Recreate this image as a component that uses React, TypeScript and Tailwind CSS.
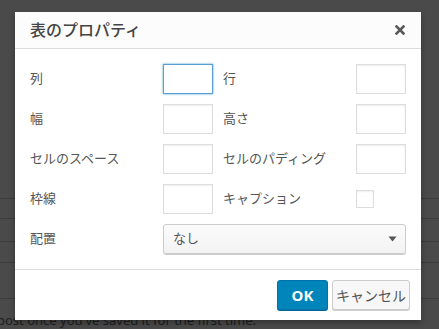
const font = { fontFamily: '"Noto Sans", "Noto Sans CJK JP", sans-serif' }

function Field({ focused }: { focused?: boolean }) {
    return (
        <div
            className={
                focused
                    ? 'h-[30px] w-[50px] border border-[#5b9dd9] bg-white shadow-[0_0_2px_rgba(30,140,190,0.8)]'
                    : 'h-[30px] w-[50px] border border-[#dddddd] bg-white shadow-[inset_0_1px_2px_rgba(0,0,0,0.07)]'
            }
        />
    )
}

function Label({ text }: { text: string }) {
    return <div className="flex h-[30px] items-center text-[13px] text-[#555555]">{text}</div>
}

export default function App() {
    return (
        <div className="relative h-[329px] w-[439px] overflow-hidden bg-[#4a4a4a]" style={font}>
            {/* dimmed page behind the modal */}
            <div className="flex flex-col">
                <div className="h-[198px]" />
                <div className="h-[20px] border-t border-[#3c3c3c]" />
                <div className="h-[23px] border-t border-[#3c3c3c]" />
                <div className="h-[21px] border-t border-[#3c3c3c]" />
                <div className="h-[36px] border-t border-[#3c3c3c]" />
                <div className="border-t border-[#3c3c3c] pt-[13px]">
                    <div className="-ml-[3px] whitespace-nowrap text-[13px] leading-[16px] text-[#1e1e1e]">
                        post once you've saved it for the first time.
                    </div>
                </div>
            </div>

            {/* modal */}
            <div className="absolute left-[15px] top-[12px] flex w-[406px] flex-col bg-white shadow-[0_3px_6px_rgba(0,0,0,0.3)]">
                <div className="flex h-[37px] items-center justify-between border-b border-[#dddddd] bg-[#fcfcfc] pl-[15px] pr-[16px]">
                    <span className="text-[16px] font-medium text-[#444444]">表のプロパティ</span>
                    <svg width="10" height="10" viewBox="0 0 10 10">
                        <path d="M1.5 1.5 L8.5 8.5 M8.5 1.5 L1.5 8.5" stroke="#595959" strokeWidth="2.6" strokeLinecap="square" />
                    </svg>
                </div>

                <div className="grid grid-cols-[133px_50px_10px_133px_50px] gap-y-[10px] px-[15px] py-[15px]">
                    <Label text="列" />
                    <Field focused />
                    <div />
                    <Label text="行" />
                    <Field />

                    <Label text="幅" />
                    <Field />
                    <div />
                    <Label text="高さ" />
                    <Field />

                    <Label text="セルのスペース" />
                    <Field />
                    <div />
                    <Label text="セルのパディング" />
                    <Field />

                    <Label text="枠線" />
                    <Field />
                    <div />
                    <Label text="キャプション" />
                    <div className="flex h-[30px] items-center">
                        <div className="h-[18px] w-[18px] border border-[#dddddd] bg-white shadow-[inset_0_1px_2px_rgba(0,0,0,0.07)]" />
                    </div>

                    <Label text="配置" />
                    <div className="col-span-4 flex h-[30px] items-center justify-between rounded-[3px] border border-[#cccccc] bg-gradient-to-b from-[#fbfbfb] to-[#f3f3f3] pl-[9px] pr-[8px] shadow-[0_1px_0_#cccccc]">
                        <span className="text-[13px] text-[#555555]">なし</span>
                        <svg width="9" height="6" viewBox="0 0 9 6">
                            <path d="M0.5 0.5 H8.5 L4.5 5.5 Z" fill="#555555" />
                        </svg>
                    </div>
                </div>

                <div className="flex h-[51px] items-center justify-end gap-[4px] border-t border-[#dddddd] pr-[11px]">
                    <button className="flex h-[30px] w-[51px] items-center justify-center rounded-[3px] border border-[#0073aa] bg-[#0085ba] text-[15px] font-bold text-white shadow-[0_1px_0_#006799]">
                        OK
                    </button>
                    <button className="flex h-[30px] w-[78px] items-center justify-center rounded-[3px] border border-[#cccccc] bg-[#f7f7f7] text-[14px] text-[#555555] shadow-[0_1px_0_#cccccc]">
                        キャンセル
                    </button>
                </div>
            </div>
        </div>
    )
}
